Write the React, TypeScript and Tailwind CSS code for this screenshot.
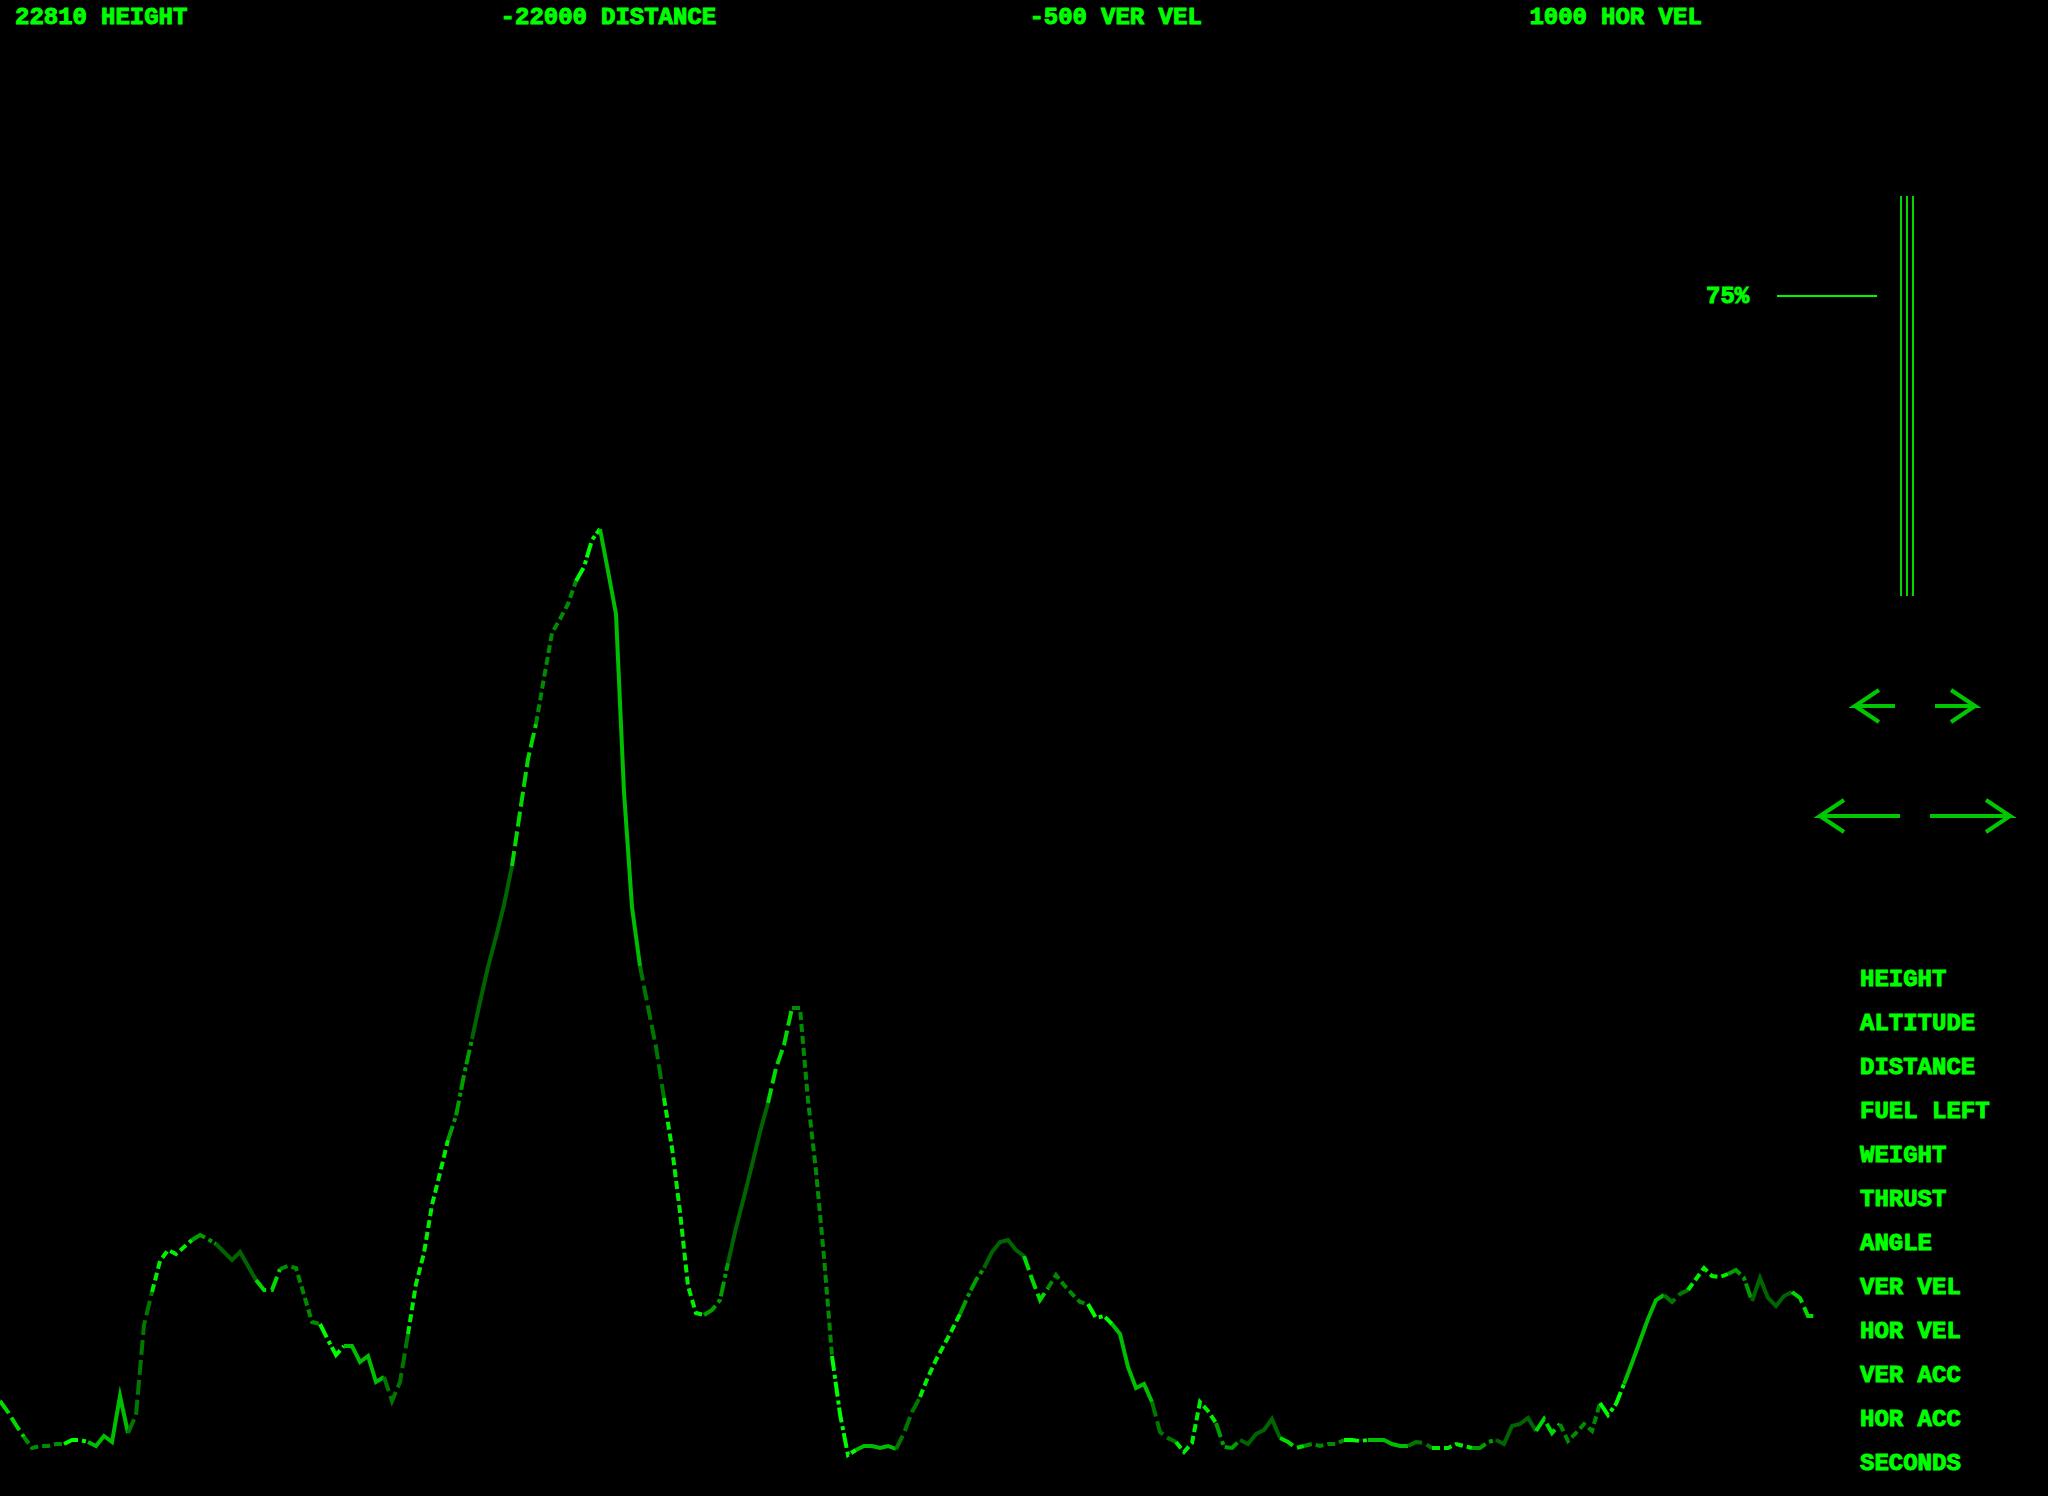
import { useState } from "react";

const STEP = 8;

const TERRAIN = [
  1401, 1412, 1425, 1437, 1448, 1446, 1446, 1444, 1444, 1440, 1440, 1442, 1446, 1436, 1442, 1396,
  1433, 1415, 1325, 1292, 1261, 1250, 1254, 1247, 1240, 1235, 1239, 1244, 1252, 1260, 1252, 1266,
  1280, 1290, 1290, 1269, 1266, 1268, 1295, 1322, 1324, 1340, 1355, 1346, 1346, 1362, 1356, 1382,
  1377, 1401, 1382, 1334, 1284, 1253, 1205, 1173, 1140, 1116, 1075, 1039, 1002, 967, 937, 905,
  866, 812, 759, 724, 678, 633, 619, 604, 581, 567, 540, 529, 571, 614, 792, 907,
  966, 1007, 1047, 1098, 1148, 1212, 1286, 1313, 1315, 1310, 1300, 1263, 1228, 1197, 1165, 1132,
  1103, 1068, 1045, 1008, 1008, 1100, 1171, 1257, 1356, 1414, 1455, 1450, 1446, 1446, 1448, 1446,
  1449, 1433, 1412, 1397, 1377, 1360, 1345, 1330, 1314, 1296, 1280, 1268, 1252, 1242, 1240, 1250,
  1256, 1279, 1300, 1288, 1275, 1285, 1294, 1302, 1304, 1318, 1316, 1324, 1334, 1367, 1388, 1384,
  1402, 1432, 1438, 1442, 1452, 1443, 1402, 1411, 1423, 1447, 1448, 1440, 1444, 1434, 1430, 1419,
  1438, 1442, 1448, 1446, 1444, 1446, 1444, 1444, 1440, 1440, 1441, 1440, 1440, 1440, 1444, 1446,
  1446, 1442, 1443, 1448, 1448, 1448, 1444, 1446, 1448, 1448, 1442, 1440, 1444, 1426, 1424, 1418,
  1431, 1419, 1433, 1424, 1441, 1433, 1424, 1431, 1403, 1415, 1404, 1384, 1363, 1341, 1319, 1300,
  1295, 1302, 1294, 1290, 1279, 1268, 1276, 1277, 1274, 1270, 1278, 1301, 1278, 1298, 1306, 1296,
  1292, 1298, 1316, 1316,
];

const LONG = "15 5";
const SHORT = "8 4";
const DASH_DOT = "15 4 4 3";

// The ground is drawn in a repeating cycle of line styles and intensities.
const CYCLE = [
  { length: 3, dash: LONG, color: "#00dc00" },
  { length: 5, dash: SHORT, color: "#008c00" },
  { length: 3, dash: DASH_DOT, color: "#00ff00" },
  { length: 5, dash: undefined, color: "#00be00" },
  { length: 3, dash: LONG, color: "#007800" },
  { length: 5, dash: SHORT, color: "#00f000" },
  { length: 3, dash: DASH_DOT, color: "#00a000" },
  { length: 5, dash: undefined, color: "#006400" },
];

function groundRuns() {
  const runs: { points: string; dash?: string; color: string }[] = [];
  let start = 0;
  for (let i = 0; start < TERRAIN.length - 1; i++) {
    const style = CYCLE[i % CYCLE.length];
    const points = TERRAIN.slice(start, start + style.length + 1)
      .map((y, k) => `${(start + k) * STEP},${y}`)
      .join(" ");
    runs.push({ points, dash: style.dash, color: style.color });
    start += style.length;
  }
  return runs;
}

const READOUTS = [
  { value: "22810", label: "HEIGHT" },
  { value: "-22000", label: "DISTANCE" },
  { value: "-500", label: "VER VEL" },
  { value: "1000", label: "HOR VEL" },
];

const MENU = [
  "HEIGHT", "ALTITUDE", "DISTANCE", "FUEL LEFT", "WEIGHT", "THRUST",
  "ANGLE", "VER VEL", "HOR VEL", "VER ACC", "HOR ACC", "SECONDS",
];

function Ground() {
  return (
    <svg
      className="pointer-events-none absolute inset-0 h-full w-full"
      viewBox="0 0 2048 1496"
      preserveAspectRatio="xMinYMax meet"
      aria-hidden="true"
    >
      {groundRuns().map((run) => (
        <polyline
          key={run.points}
          points={run.points}
          fill="none"
          stroke={run.color}
          strokeWidth={4}
          strokeMiterlimit={10}
          strokeDasharray={run.dash}
        />
      ))}
    </svg>
  );
}

function Arrow({ length, right, label }: { length: number; right?: boolean; label: string }) {
  const tip = right ? length - 6 : 6;
  const barb = right ? tip - 24 : tip + 24;
  const tail = right ? 0 : length;
  return (
    <button type="button" aria-label={label} className="cursor-pointer">
      <svg width={length} height={40} fill="none" stroke="#00c800" strokeWidth={4} strokeMiterlimit={10} className="block">
        <path d={`M${tail} 20H${tip}L${barb} 4M${tip} 20L${barb} 36`} />
      </svg>
    </button>
  );
}

function Throttle() {
  const [thrust, setThrust] = useState(75);
  return (
    <div className="relative flex h-[400px]">
      <div className="flex h-8 -translate-y-1/2 items-center" style={{ marginTop: `${(100 - thrust) * 4}px` }}>
        <label htmlFor="thrust" className="w-[71px] pt-[2px]">{thrust}%</label>
        <span className="h-[2px] w-[100px] bg-[#00f500]" />
      </div>
      <div className="ml-[23px] flex gap-1">
        <span className="w-[2px] bg-[#00d800]" />
        <span className="w-[2px] bg-[#00d800]" />
        <span className="w-[2px] bg-[#00d800]" />
      </div>
      <input
        id="thrust"
        type="range"
        min={0}
        max={100}
        value={thrust}
        onChange={(e) => setThrust(Number(e.target.value))}
        className="absolute top-0 left-[71px] h-full w-[140px] cursor-pointer opacity-0 [direction:rtl] [writing-mode:vertical-lr]"
      />
    </div>
  );
}

export default function App() {
  return (
    <main className="relative min-h-screen overflow-hidden bg-black font-['Liberation_Mono',monospace] text-[24px] leading-8 font-bold text-[#00ff00] [-webkit-text-stroke:1px_#00ff00]">
      <Ground />
      <header className="relative grid grid-cols-4 pt-[2px] pr-12">
        {READOUTS.map((r) => (
          <div key={r.label} className="flex gap-[14px] whitespace-nowrap">
            <span className="flex w-[87px] justify-end">{r.value}</span>
            <span>{r.label}</span>
          </div>
        ))}
      </header>
      <aside className="relative ml-auto w-[342px] pt-[162px]">
        <Throttle />
        <div className="mt-[90px] flex justify-center gap-10 pl-[76px]">
          <Arrow length={46} label="Rotate left slowly" />
          <Arrow length={46} right label="Rotate right slowly" />
        </div>
        <div className="mt-[70px] flex justify-center gap-[30px] pl-[76px]">
          <Arrow length={86} label="Rotate left quickly" />
          <Arrow length={86} right label="Rotate right quickly" />
        </div>
        <ul className="mt-[122px] pl-[154px]">
          {MENU.map((item) => (
            <li key={item}>
              <button type="button" className="block h-11 cursor-pointer whitespace-nowrap">{item}</button>
            </li>
          ))}
        </ul>
      </aside>
    </main>
  );
}
